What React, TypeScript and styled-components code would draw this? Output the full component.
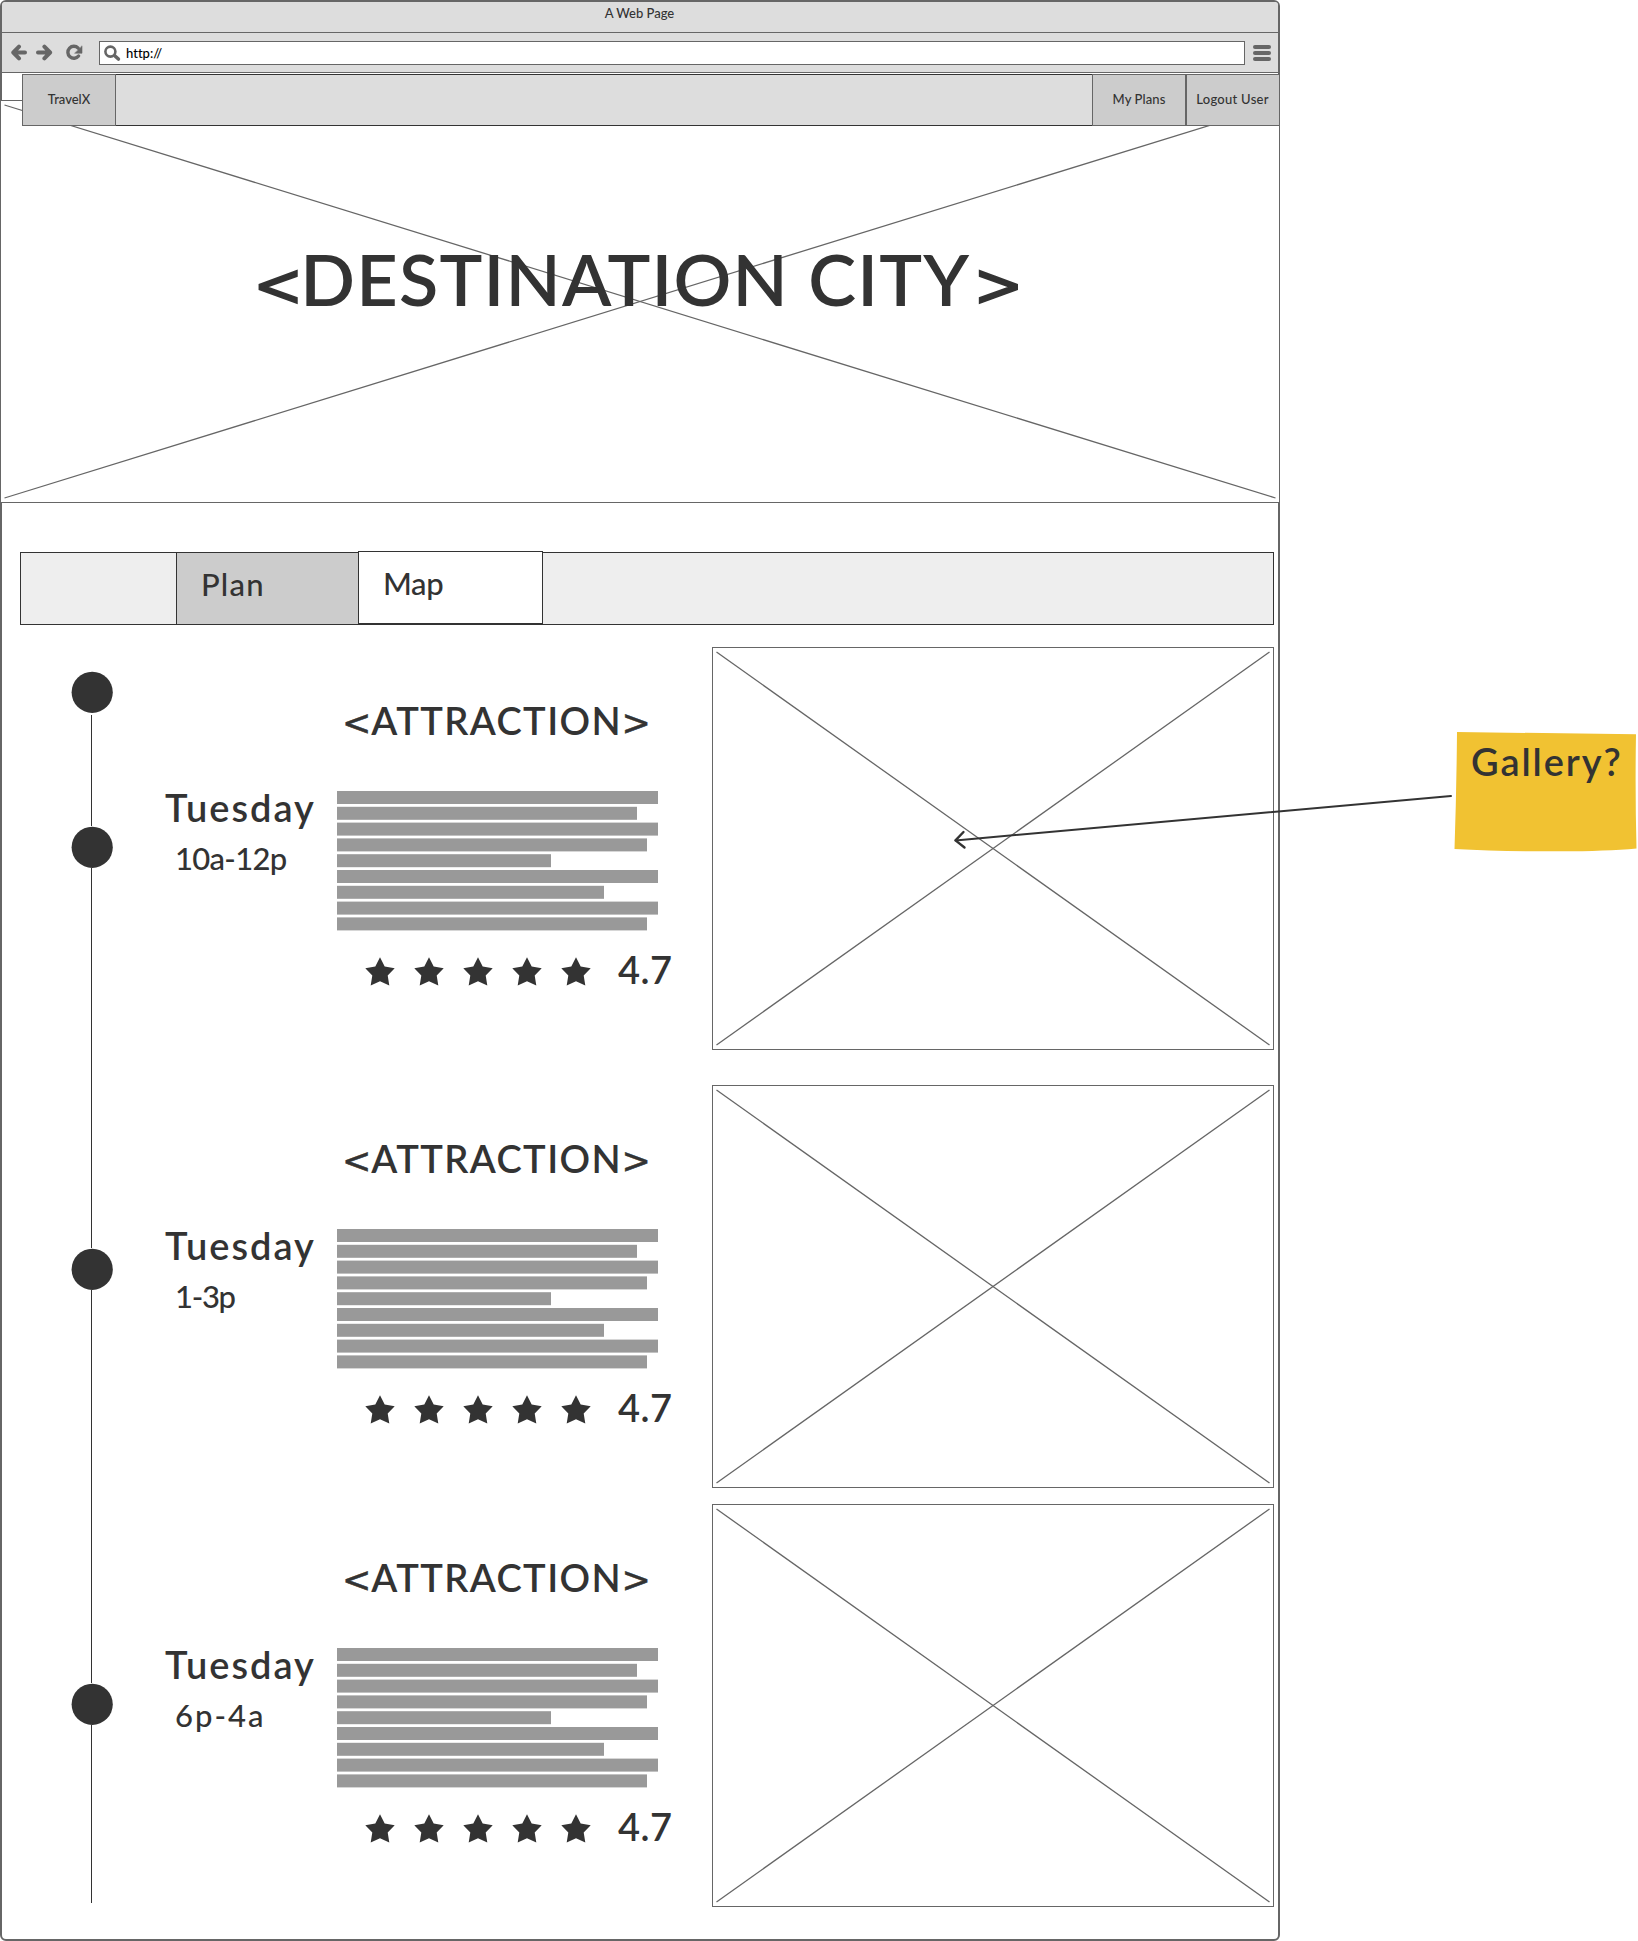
import React from "react";
import styled, { createGlobalStyle } from "styled-components";

const ink = "#333333";
const line = "#666666";

const GlobalStyle = createGlobalStyle`
  * { box-sizing: border-box; }
  body { margin: 0; background: #ffffff; }
`;

const Canvas = styled.div`
  position: relative;
  width: 1638px;
  height: 1941px;
  overflow: hidden;
  color: ${ink};
  font-family: Lato, "Open Sans", sans-serif;
  font-weight: 500;
  font-variant-ligatures: none;
  white-space: nowrap;
`;

const BrowserWindow = styled.div`
  display: flex;
  flex-direction: column;
  width: 1280px;
  height: 1941px;
  border: 2px solid ${line};
  border-radius: 6px;
  background: #ffffff;
`;

const TitleBar = styled.header`
  height: 31px;
  padding-right: 1px;
  border-bottom: 1px solid ${line};
  border-radius: 3px 3px 0 0;
  background: #dddddd;
  font-size: 13px;
  line-height: 22px;
  text-align: center;
`;

const Toolbar = styled.div`
  display: flex;
  align-items: flex-start;
  height: 40px;
  padding: 8px 7px 0 9px;
  border-bottom: 1px solid ${line};
  background: #dddddd;
`;

const ToolbarIcon = styled.svg<{ $gap: number }>`
  flex: none;
  width: 17px;
  height: 17px;
  margin: 3px ${(p) => p.$gap}px 0 0;
  fill: none;
  stroke: ${line};
  stroke-linecap: round;
  stroke-linejoin: round;
`;

const AddressField = styled.div`
  display: flex;
  flex: 1;
  height: 24px;
  padding-left: 4px;
  border: 1px solid ${line};
  background: #ffffff;
  color: #000000;
  font-size: 13px;
  line-height: 22px;
`;

const MenuButton = styled.div`
  display: flex;
  flex-direction: column;
  gap: 2px;
  width: 18px;
  margin: 4px 0 0 8px;
`;

const MenuBar = styled.span`
  height: 4px;
  border-radius: 2px;
  background: ${line};
`;

const SiteNav = styled.nav`
  position: relative;
  z-index: 1;
  display: flex;
  flex: none;
  height: 52px;
  margin: 1px -2px 0 20px;
`;

const NavItem = styled.a<{ $width: number; $spacing?: number }>`
  display: flex;
  align-items: center;
  justify-content: center;
  width: ${(p) => p.$width}px;
  padding: 0 0 2px;
  border: 1px solid ${line};
  background: #cccccc;
  font-size: 13px;
  letter-spacing: ${(p) => p.$spacing ?? 0}px;
  & + & { padding-right: 1px; }
`;

const NavSpacer = styled.div`
  flex: 1;
  border: solid ${ink};
  border-width: 1px 0;
  background: #dddddd;
`;

const Hero = styled.section`
  display: grid;
  flex: none;
  height: 403px;
  margin: -26px -2px 0;
  border: 1px solid ${line};
  background: #ffffff;
  > * { grid-area: 1 / 1; }
`;

const HeroTitle = styled.h1`
  margin: 134px 0 0 252px;
  font-size: 72px;
  font-weight: 600;
  line-height: 86px;
  letter-spacing: 1.2px;
`;

const Bracket = styled.span<{ $size: number; $before?: number; $after?: number }>`
  margin: 0 ${(p) => p.$after ?? 0}px 0 ${(p) => p.$before ?? 0}px;
  font-family: "DejaVu Sans", sans-serif;
  font-size: ${(p) => p.$size}px;
  font-weight: 400;
  line-height: 0;
  letter-spacing: 0;
  -webkit-text-stroke: ${(p) => (p.$size > 50 ? 1.6 : 0.5)}px ${ink};
`;

const Cross = styled.svg`
  display: block;
  width: 100%;
  height: 100%;
  stroke: ${line};
  stroke-width: 1.3;
`;

const TabBar = styled.div`
  display: flex;
  flex: none;
  align-items: flex-start;
  width: 1254px;
  height: 73px;
  margin: 49px 0 0 18px;
  padding-left: 155px;
  border: 1px solid ${ink};
  background: #eeeeee;
`;

const Tab = styled.div<{ $active?: boolean; $spacing: number }>`
  width: ${(p) => (p.$active ? 185 : 182)}px;
  height: ${(p) => (p.$active ? 73 : 71)}px;
  margin-top: ${(p) => (p.$active ? -2 : 0)}px;
  padding: 12px 0 0 24px;
  border: solid ${ink};
  border-width: ${(p) => (p.$active ? "1px" : "0 0 0 1px")};
  background: ${(p) => (p.$active ? "#ffffff" : "#cccccc")};
  font-size: 31px;
  line-height: 38px;
  letter-spacing: ${(p) => p.$spacing}px;
`;

const Itinerary = styled.main`
  display: flex;
  align-items: flex-start;
`;

const Timeline = styled.div`
  display: flex;
  flex-direction: column;
  width: 94px;
  margin-top: 46px;
  padding-left: 69px;
`;

const Dot = styled.svg`
  flex: none;
  width: 42px;
  height: 42px;
  fill: ${ink};
`;

const Segment = styled.div<{ $length: number; $offset?: number }>`
  width: 1px;
  height: ${(p) => p.$length}px;
  margin: ${(p) => p.$offset ?? 0}px 0 0 20px;
  background: ${ink};
`;

const Stops = styled.div`
  display: flex;
  flex-direction: column;
  margin-top: 22px;
`;

const Stop = styled.article<{ $gap: number }>`
  display: grid;
  grid-template-columns: 175px 375px 562px;
  height: 403px;
  margin: 0 0 ${(p) => p.$gap}px 66px;
`;

const When = styled.div`
  margin-left: 3px;
  padding-top: 137px;
`;

const Day = styled.div`
  font-size: 38px;
  font-weight: 600;
  line-height: 46px;
  letter-spacing: 2px;
`;

const Hours = styled.div<{ $spacing: number }>`
  margin: 9px 0 0 10px;
  font-size: 31px;
  line-height: 38px;
  letter-spacing: ${(p) => p.$spacing}px;
`;

const Details = styled.div`
  padding-top: 50px;
`;

const Attraction = styled.h2`
  margin: 0 0 48px 5px;
  font-size: 38px;
  font-weight: 600;
  line-height: 46px;
  letter-spacing: 1.4px;
`;

const Summary = styled.svg`
  display: block;
  width: 321px;
  height: 140px;
  fill: #999999;
`;

const Rating = styled.div`
  display: flex;
  align-items: flex-start;
  gap: 19px;
  margin: 15px 0 0 28px;
  font-size: 38px;
  line-height: 46px;
`;

const Star = styled.svg`
  width: 30px;
  height: 29px;
  margin-top: 11px;
  fill: ${ink};
`;

const Score = styled.span`
  margin-left: 8px;
  font-weight: 600;
  letter-spacing: 0.5px;
`;

const Photo = styled.div`
  border: 1px solid ${line};
`;

const Sticky = styled.aside`
  position: absolute;
  left: 1454px;
  top: 731px;
  display: grid;
  width: 184px;
  height: 122px;
  > * { grid-area: 1 / 1; }
`;

const StickyPaper = styled.svg`
  width: 184px;
  height: 122px;
  fill: #f1c232;
`;

const StickyText = styled.span`
  z-index: 1;
  padding: 7px 0 0 17px;
  font-size: 38px;
  font-weight: 600;
  line-height: 46px;
  letter-spacing: 1.9px;
`;

const Pointer = styled.svg`
  position: absolute;
  left: 950px;
  top: 790px;
  width: 505px;
  height: 62px;
  fill: none;
  stroke: ${ink};
  stroke-linecap: round;
  stroke-linejoin: round;
`;

function Placeholder({ w, h }: { w: number; h: number }) {
  return (
    <Cross viewBox={`0 0 ${w} ${h}`}>
      <line x1={3.5} y1={4} x2={w - 3.5} y2={h - 4} />
      <line x1={3.5} y1={h - 4} x2={w - 3.5} y2={4} />
    </Cross>
  );
}

function TimelineDot() {
  return (
    <Dot viewBox="0 0 42 42">
      <circle cx="21.2" cy="21.3" r="20.6" />
    </Dot>
  );
}

const summaryLines = [321, 300, 321, 310, 214, 321, 267, 321, 310];

const stops = [
  { day: "Tuesday", hours: "10a-12p", spacing: -0.7, gap: 35 },
  { day: "Tuesday", hours: "1-3p", spacing: -1.3, gap: 16 },
  { day: "Tuesday", hours: "6p-4a", spacing: 2, gap: 0 },
];

export default function App() {
  return (
    <Canvas>
      <GlobalStyle />
      <BrowserWindow>
        <TitleBar>A Web Page</TitleBar>
        <Toolbar>
          <ToolbarIcon $gap={8} viewBox="0 0 17 17" strokeWidth="4">
            <path d="M14 8.5H3M8 2.6L2.3 8.5L8 14.4" />
          </ToolbarIcon>
          <ToolbarIcon $gap={13} viewBox="0 0 17 17" strokeWidth="4">
            <path d="M2 8.5H13.4M8.4 2.6L14.1 8.5L8.4 14.4" />
          </ToolbarIcon>
          <ToolbarIcon $gap={16} viewBox="0 0 17 17" strokeWidth="3.4">
            <path d="M12.2 4.1A6 6 0 1 0 12.6 12" />
            <path d="M16 2.2V9.2H9Z" fill={line} strokeWidth="0.6" />
          </ToolbarIcon>
          <AddressField>
            <ToolbarIcon $gap={5} viewBox="0 0 17 17" strokeWidth="2.6">
              <circle cx="6.4" cy="6.6" r="5" />
              <path d="M11 11L14.4 14" strokeWidth="3.6" />
            </ToolbarIcon>
            http://
          </AddressField>
          <MenuButton>
            <MenuBar />
            <MenuBar />
            <MenuBar />
          </MenuButton>
        </Toolbar>

        <SiteNav>
          <NavItem $width={94}>TravelX</NavItem>
          <NavSpacer />
          <NavItem $width={94} $spacing={0.1}>My Plans</NavItem>
          <NavItem $width={94} $spacing={0.27}>Logout User</NavItem>
        </SiteNav>

        <Hero>
          <Placeholder w={1278} h={401} />
          <HeroTitle>
            <Bracket $size={60} $after={-3}>&lt;</Bracket>
            DESTINATION CITY
            <Bracket $size={60} $before={3}>&gt;</Bracket>
          </HeroTitle>
        </Hero>

        <TabBar>
          <Tab $spacing={1.2}>Plan</Tab>
          <Tab $active $spacing={-0.4}>Map</Tab>
        </TabBar>

        <Itinerary>
          <Timeline>
            <TimelineDot />
            <Segment $length={111} $offset={2} />
            <TimelineDot />
            <Segment $length={380} />
            <TimelineDot />
            <Segment $length={393} />
            <TimelineDot />
            <Segment $length={178} />
          </Timeline>
          <Stops>
            {stops.map((stop) => (
              <Stop key={stop.hours} $gap={stop.gap}>
                <When>
                  <Day>{stop.day}</Day>
                  <Hours $spacing={stop.spacing}>{stop.hours}</Hours>
                </When>
                <Details>
                  <Attraction>
                    <Bracket $size={35}>&lt;</Bracket>
                    ATTRACTION
                    <Bracket $size={35} $before={-0.5}>&gt;</Bracket>
                  </Attraction>
                  <Summary viewBox="0 0 321 140">
                    {summaryLines.map((width, i) => (
                      <rect key={i} y={i * 15.8} width={width} height={13} />
                    ))}
                  </Summary>
                  <Rating>
                    {[0, 1, 2, 3, 4].map((i) => (
                      <Star key={i} viewBox="0 0 30 29">
                        <path d="M15 0.3L19.7 9.4L29.7 11.2L22.7 18.5L24.3 28.4L15 24.3L5.7 28.4L7.3 18.5L0.3 11.2L10.3 9.4Z" />
                      </Star>
                    ))}
                    <Score>4.7</Score>
                  </Rating>
                </Details>
                <Photo>
                  <Placeholder w={560} h={401} />
                </Photo>
              </Stop>
            ))}
          </Stops>
        </Itinerary>
      </BrowserWindow>

      <Sticky>
        <StickyPaper viewBox="0 0 184 122">
          <path d="M3 1L182 3.3Q181 60 182.5 117.5Q150 120.5 100 120.3Q45 120.5 0.5 118Q2.5 60 3 1Z" />
        </StickyPaper>
        <StickyText>Gallery?</StickyText>
      </Sticky>
      <Pointer viewBox="0 0 505 62">
        <path d="M501 6L5.5 50.4" strokeWidth="2" />
        <path d="M13.5 42L5.5 50.4L14.5 57.5" strokeWidth="2.4" />
      </Pointer>
    </Canvas>
  );
}
